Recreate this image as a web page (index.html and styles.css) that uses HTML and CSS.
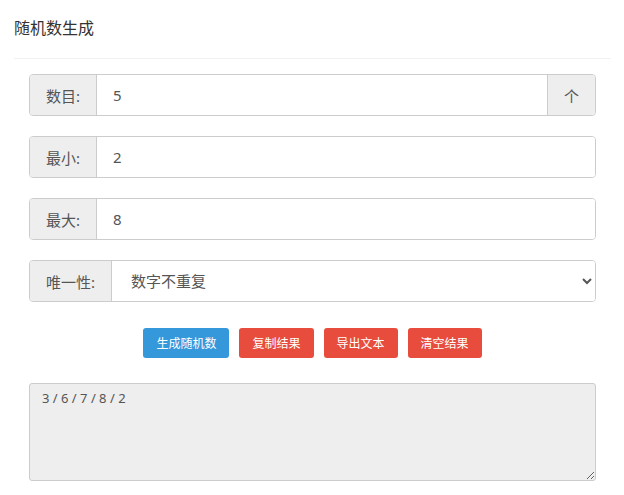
FILE: index.html
```html
<!DOCTYPE html>
<html lang="zh-CN">
<head>
<meta charset="utf-8">
<title>随机数生成</title>
<link rel="stylesheet" href="styles.css">
</head>
<body>
<div class="panel">
  <div class="panel-head">随机数生成</div>
  <div class="panel-body">
    <div class="field">
      <span class="addon">数目:</span>
      <input class="control" type="text" value="5">
      <span class="addon addon-end">个</span>
    </div>
    <div class="field">
      <span class="addon">最小:</span>
      <input class="control" type="text" value="2">
    </div>
    <div class="field">
      <span class="addon">最大:</span>
      <input class="control" type="text" value="8">
    </div>
    <div class="field">
      <span class="addon">唯一性:</span>
      <select class="control select">
        <option>数字不重复</option>
        <option>数字可重复</option>
      </select>
    </div>
    <div class="actions">
      <button class="btn btn-blue" type="button">生成随机数</button>
      <button class="btn btn-red" type="button">复制结果</button>
      <button class="btn btn-red" type="button">导出文本</button>
      <button class="btn btn-red" type="button">清空结果</button>
    </div>
    <textarea class="result" readonly>3 / 6 / 7 / 8 / 2</textarea>
  </div>
</div>
</body>
</html>
```

FILE: styles.css
```css
* {
  box-sizing: border-box;
}

body {
  margin: 0;
  background: #fff;
  font-family: "Noto Sans", "Noto Sans CJK SC", sans-serif;
  color: #555;
}

.panel {
  padding: 0 13px 0 14px;
}

.panel-head {
  height: 59px;
  padding-top: 17px;
  font-size: 16px;
  line-height: 22px;
  color: #333;
  border-bottom: 1px solid #f1f1f1;
}

.panel-body {
  padding: 15px 15px 0 15px;
}

.field {
  display: flex;
  height: 42px;
  margin-bottom: 20px;
  border: 1px solid #ccc;
  border-radius: 4px;
  overflow: hidden;
}

.addon {
  display: flex;
  align-items: center;
  padding: 0 16px;
  background: #eee;
  font-size: 15px;
  color: #555;
  border-right: 1px solid #ccc;
}

.addon-end {
  border-right: none;
  border-left: 1px solid #ccc;
  padding: 0 16px;
  width: 48px;
  justify-content: center;
}

.control {
  flex: 1;
  min-width: 0;
  border: none;
  outline: none;
  padding: 0 16px;
  font-family: inherit;
  font-size: 15px;
  color: #555;
  background: #fff;
}

.select {
  padding-left: 15px;
  padding-right: 4px;
}

.actions {
  display: flex;
  justify-content: center;
  gap: 10px;
  margin-top: 26px;
  margin-bottom: 25px;
}

.btn {
  height: 30px;
  padding: 0 13px;
  border: none;
  border-radius: 3px;
  font-family: inherit;
  font-size: 12px;
  color: #fff;
  cursor: pointer;
}

.btn-blue {
  background: #3498db;
}

.btn-red {
  background: #e74c3c;
}

.result {
  display: block;
  width: 100%;
  height: 98px;
  padding: 4px 12px;
  background: #eee;
  border: 1px solid #ccc;
  border-radius: 3px;
  font-family: inherit;
  font-size: 13px;
  line-height: 20px;
  color: #555;
  outline: none;
}
```
